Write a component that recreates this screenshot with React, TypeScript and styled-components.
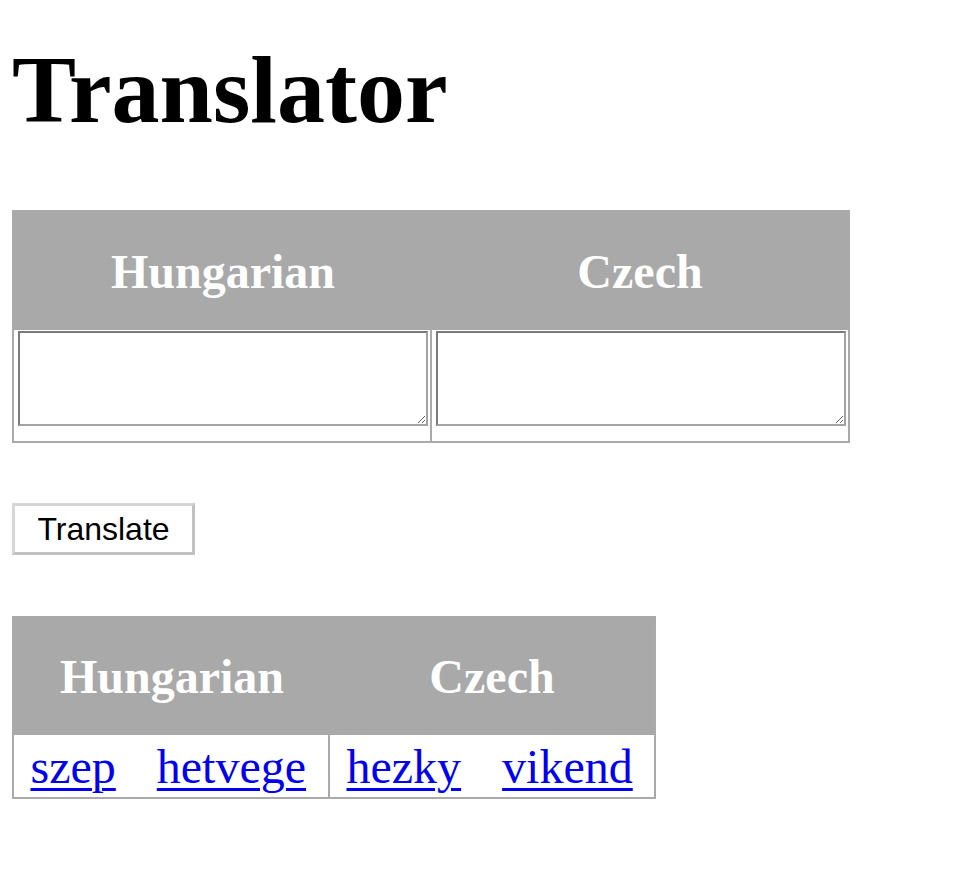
import React from "react";
import styled, { createGlobalStyle } from "styled-components";

const GlobalStyle = createGlobalStyle`
  html, body {
    margin: 0;
    padding: 0;
    background: #ffffff;
  }
  body {
    font-family: "Liberation Serif", "Times New Roman", serif;
    color: #000000;
  }
`;

const Page = styled.div`
  padding: 0 12px 12px 12px;
  display: flex;
  flex-direction: column;
  align-items: flex-start;
`;

const Title = styled.h1`
  margin: 35px 0 65px 0;
  font-family: "Liberation Serif", "Times New Roman", serif;
  font-size: 96px;
  font-weight: bold;
  line-height: 110px;
`;

const Table = styled.table<{ $width: number }>`
  width: ${(p) => p.$width}px;
  box-sizing: border-box;
  border: 2px solid #aaaaaa;
  border-spacing: 0;
  border-collapse: separate;
  table-layout: fixed;
`;

const HeadCell = styled.th<{ $width: number; $height: number }>`
  box-sizing: border-box;
  width: ${(p) => p.$width}px;
  height: ${(p) => p.$height}px;
  padding: 0;
  background: #a9a9a9;
  color: #ffffff;
  font-family: "Liberation Serif", "Times New Roman", serif;
  font-size: 48px;
  font-weight: bold;
  line-height: 55px;
  text-align: center;
  vertical-align: middle;
`;

const FieldCell = styled.td<{ $divider?: boolean }>`
  box-sizing: border-box;
  padding: 1px 2px 15px 3.5px;
  vertical-align: top;
  border-right: ${(p) => (p.$divider ? "2px solid #aaaaaa" : "none")};
`;

const Field = styled.textarea`
  display: block;
  box-sizing: border-box;
  width: 100%;
  height: 95px;
  margin: 0;
  padding: 2px;
  border: 2px solid;
  border-color: #7a7a7a #a3a3a3 #a3a3a3 #7a7a7a;
  background: #ffffff;
  font-family: "Liberation Mono", monospace;
  font-size: 16px;
  resize: both;
`;

const TranslateButton = styled.button`
  box-sizing: border-box;
  width: 183px;
  height: 52px;
  margin: 60px 0 61px 0;
  padding: 0;
  background: #ffffff;
  border: 3px solid;
  border-color: #d6d6d6 #c2c2c2 #c2c2c2 #d6d6d6;
  font-family: "Liberation Sans", Arial, sans-serif;
  font-size: 32px;
  line-height: 37px;
  color: #000000;
  cursor: pointer;
`;

const WordCell = styled.td<{ $divider?: boolean }>`
  box-sizing: border-box;
  height: 62px;
  padding: 1px 0 0 0;
  vertical-align: middle;
  border-right: ${(p) => (p.$divider ? "2px solid #aaaaaa" : "none")};
`;

const LinkRow = styled.div`
  display: flex;
  align-items: center;
  gap: 41px;
  padding-left: 16.5px;
`;

const WordLink = styled.a`
  font-family: "Liberation Serif", "Times New Roman", serif;
  font-size: 48px;
  line-height: 55px;
  color: #0000ee;
  text-decoration: underline;
  text-decoration-thickness: 3px;
  text-underline-offset: 5px;
`;

const hungarian = ["szep", "hetvege"];
const czech = ["hezky", "vikend"];

export default function App() {
  return (
    <>
      <GlobalStyle />
      <Page>
        <Title>Translator</Title>
        <Table $width={838}>
          <thead>
            <tr>
              <HeadCell $width={418} $height={118}>Hungarian</HeadCell>
              <HeadCell $width={416} $height={118}>Czech</HeadCell>
            </tr>
          </thead>
          <tbody>
            <tr>
              <FieldCell $divider>
                <Field />
              </FieldCell>
              <FieldCell>
                <Field />
              </FieldCell>
            </tr>
          </tbody>
        </Table>
        <TranslateButton type="button">Translate</TranslateButton>
        <Table $width={644}>
          <thead>
            <tr>
              <HeadCell $width={316} $height={117}>Hungarian</HeadCell>
              <HeadCell $width={324} $height={117}>Czech</HeadCell>
            </tr>
          </thead>
          <tbody>
            <tr>
              <WordCell $divider>
                <LinkRow>
                  {hungarian.map((w) => (
                    <WordLink key={w} href="#">
                      {w}
                    </WordLink>
                  ))}
                </LinkRow>
              </WordCell>
              <WordCell>
                <LinkRow>
                  {czech.map((w) => (
                    <WordLink key={w} href="#">
                      {w}
                    </WordLink>
                  ))}
                </LinkRow>
              </WordCell>
            </tr>
          </tbody>
        </Table>
      </Page>
    </>
  );
}
